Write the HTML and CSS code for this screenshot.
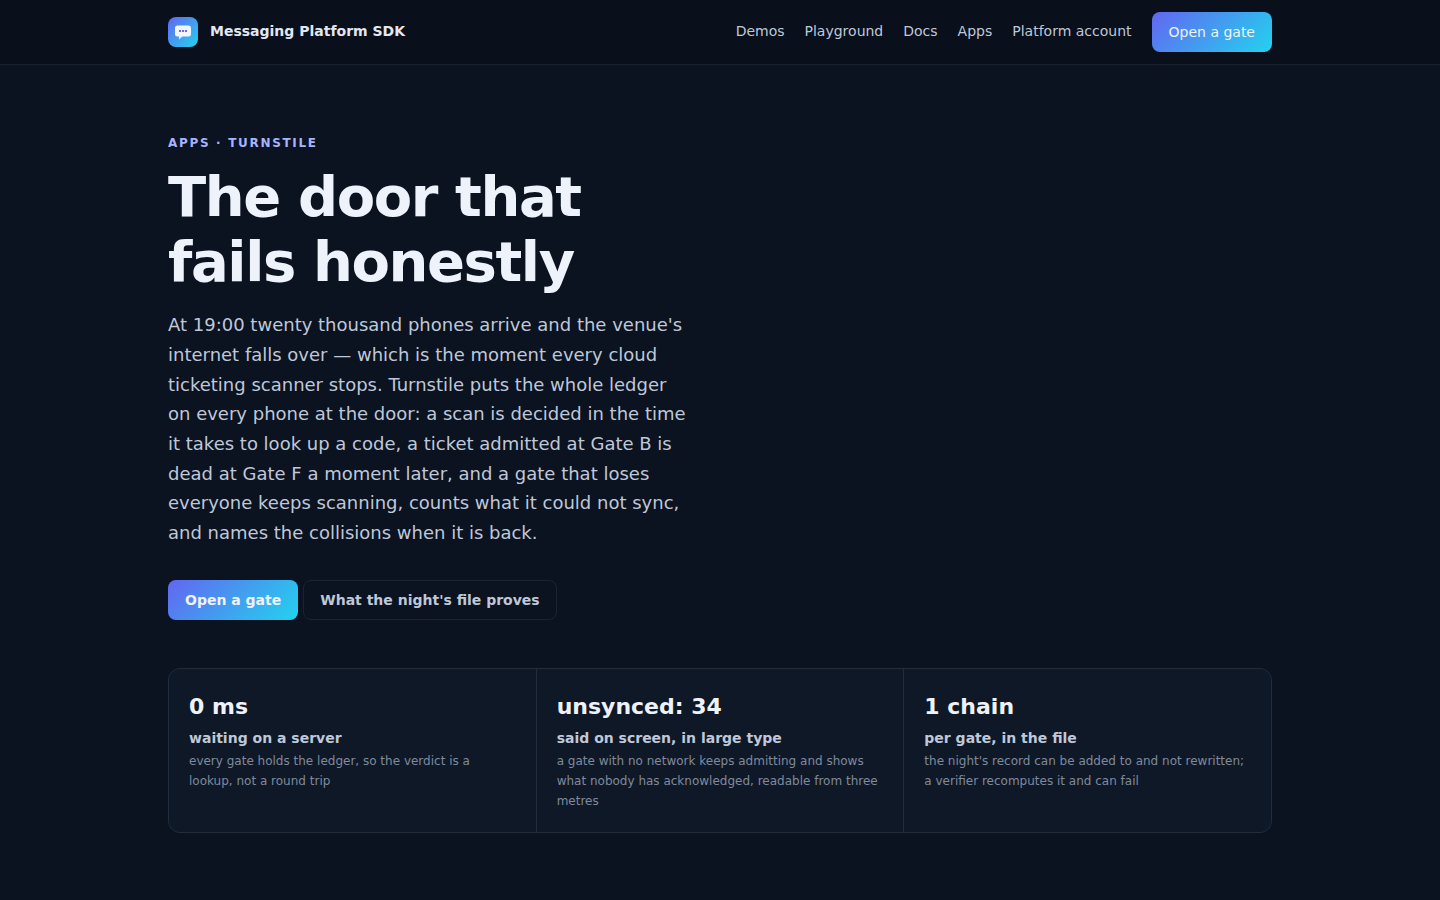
FILE: index.html
```html
<!DOCTYPE html>
<html lang="en">
<head>
  <meta charset="UTF-8" />
  <meta name="viewport" content="width=device-width, initial-scale=1.0"/>
  <title>Turnstile</title>
  <link rel="stylesheet" href="styles.css">
</head>
<body>
  <header class="topbar">
    <div class="topbar-inner">
      <a class="brand" href="#">
        <span class="brand-mark">
          <svg viewBox="0 0 18 18" width="18" height="18">
            <path d="M3.500 2.500h11A2.500 2.500 0 0 1 17 5v6a2.500 2.500 0 0 1-2.500 2.500H8.500L5 16.500v-3H3.500A2.500 2.500 0 0 1 1 11V5a2.500 2.500 0 0 1 2.500-2.500z" fill="#f1f5ff"/>
            <circle cx="6" cy="8" r="1.100" fill="#4f46e5"/>
            <circle cx="9" cy="8" r="1.100" fill="#4f46e5"/>
            <circle cx="12" cy="8" r="1.100" fill="#4f46e5"/>
          </svg>
        </span>
        <span class="brand-name">Messaging Platform SDK</span>
      </a>
      <nav class="nav">
        <a class="nav-link" href="#">Demos</a>
        <a class="nav-link" href="#">Playground</a>
        <a class="nav-link" href="#">Docs</a>
        <a class="nav-link" href="#">Apps</a>
        <a class="nav-link" href="#">Platform account</a>
        <a class="nav-cta" href="#">Open a gate</a>
      </nav>
    </div>
  </header>

  <main class="page">
    <section class="hero">
      <p class="eyebrow">APPS · TURNSTILE</p>
      <h1>The door that fails honestly</h1>
      <p class="lede">At 19:00 twenty thousand phones arrive and the venue's internet falls over — which is the moment every cloud ticketing scanner stops. Turnstile puts the whole ledger on every phone at the door: a scan is decided in the time it takes to look up a code, a ticket admitted at Gate B is dead at Gate F a moment later, and a gate that loses everyone keeps scanning, counts what it could not sync, and names the collisions when it is back.</p>
      <div class="actions">
        <a class="btn btn-primary" href="#">Open a gate</a>
        <a class="btn btn-ghost" href="#">What the night's file proves</a>
      </div>
    </section>

    <section class="stats">
      <div class="stat">
        <div class="stat-value">0 ms</div>
        <div class="stat-label">waiting on a server</div>
        <div class="stat-note">every gate holds the ledger, so the verdict is a lookup, not a round trip</div>
      </div>
      <div class="stat">
        <div class="stat-value">unsynced: 34</div>
        <div class="stat-label">said on screen, in large type</div>
        <div class="stat-note">a gate with no network keeps admitting and shows what nobody has acknowledged, readable from three metres</div>
      </div>
      <div class="stat">
        <div class="stat-value">1 chain</div>
        <div class="stat-label">per gate, in the file</div>
        <div class="stat-note">the night's record can be added to and not rewritten; a verifier recomputes it and can fail</div>
      </div>
    </section>
  </main>
</body>
</html>
```

FILE: styles.css
```css
* {
  box-sizing: border-box;
}

body {
  margin: 0;
  min-height: 100vh;
  background: #0b1220;
  color: #eef2fb;
  font-family: "DejaVu Sans", sans-serif;
}

a {
  text-decoration: none;
  color: inherit;
}

.topbar {
  height: 65px;
  background: #090f1b;
  border-bottom: 1px solid #182130;
}

.topbar-inner {
  width: 1104px;
  margin: 0 auto;
  height: 64px;
  display: flex;
  align-items: center;
  justify-content: space-between;
}

.brand {
  display: flex;
  align-items: center;
  gap: 12px;
  font-size: 14px;
  line-height: 21px;
  font-weight: 700;
  color: #e2e7f2;
}

.brand-name {
  padding-bottom: 2px;
}

.brand-mark {
  width: 30px;
  height: 30px;
  border-radius: 8px;
  background: linear-gradient(135deg, #6366f1, #22d3ee);
  display: flex;
  align-items: center;
  justify-content: center;
}

.nav {
  display: flex;
  align-items: center;
  gap: 20px;
  font-size: 14px;
  line-height: 21px;
  color: #bfc8d9;
}

.nav-link {
  padding-bottom: 2px;
}

.nav-cta {
  height: 40px;
  padding: 0 17px;
  display: flex;
  align-items: center;
  border-radius: 8px;
  background: linear-gradient(135deg, #6366f1, #22d3ee);
  color: #eef2fb;
}

.page {
  width: 1104px;
  margin: 0 auto;
}

.hero {
  padding-top: 70px;
  width: 520px;
}

.eyebrow {
  margin: 0;
  font-size: 12px;
  line-height: 16px;
  font-weight: 700;
  letter-spacing: 0.14em;
  color: #a5b4fc;
}

h1 {
  margin: 13px 0 0;
  font-size: 56px;
  line-height: 65px;
  font-weight: 700;
  letter-spacing: -0.025em;
  color: #eef2fb;
}

.lede {
  margin: 16.2px 0 0;
  font-size: 18px;
  line-height: 29.7px;
  color: #bfc8d9;
}

.actions {
  display: flex;
  gap: 5px;
  margin-top: 32.2px;
}

.btn {
  height: 40px;
  padding: 0 17px;
  display: flex;
  align-items: center;
  border-radius: 8px;
  font-size: 14px;
  font-weight: 700;
}

.btn-primary {
  background: linear-gradient(135deg, #6366f1, #22d3ee);
  color: #eef2fb;
}

.btn-ghost {
  padding: 0 16px;
  border: 1px solid #1b2433;
  color: #bfc8d9;
}

.stats {
  margin-top: 48px;
  display: grid;
  grid-template-columns: repeat(3, 1fr);
  gap: 1px;
  height: 165px;
  background: #222c3b;
  border: 1px solid #222c3b;
  border-radius: 12px;
  overflow: hidden;
}

.stat {
  padding: 20px;
  background: #0f1826;
}

.stat-value {
  font-size: 22px;
  line-height: 36px;
  font-weight: 700;
  color: #eef2fb;
}

.stat-label {
  margin-top: 3px;
  font-size: 14px;
  line-height: 20px;
  font-weight: 700;
  color: #bfc8d9;
}

.stat-note {
  margin-top: 3px;
  font-size: 12px;
  line-height: 20px;
  color: #7f8a9e;
}
```
